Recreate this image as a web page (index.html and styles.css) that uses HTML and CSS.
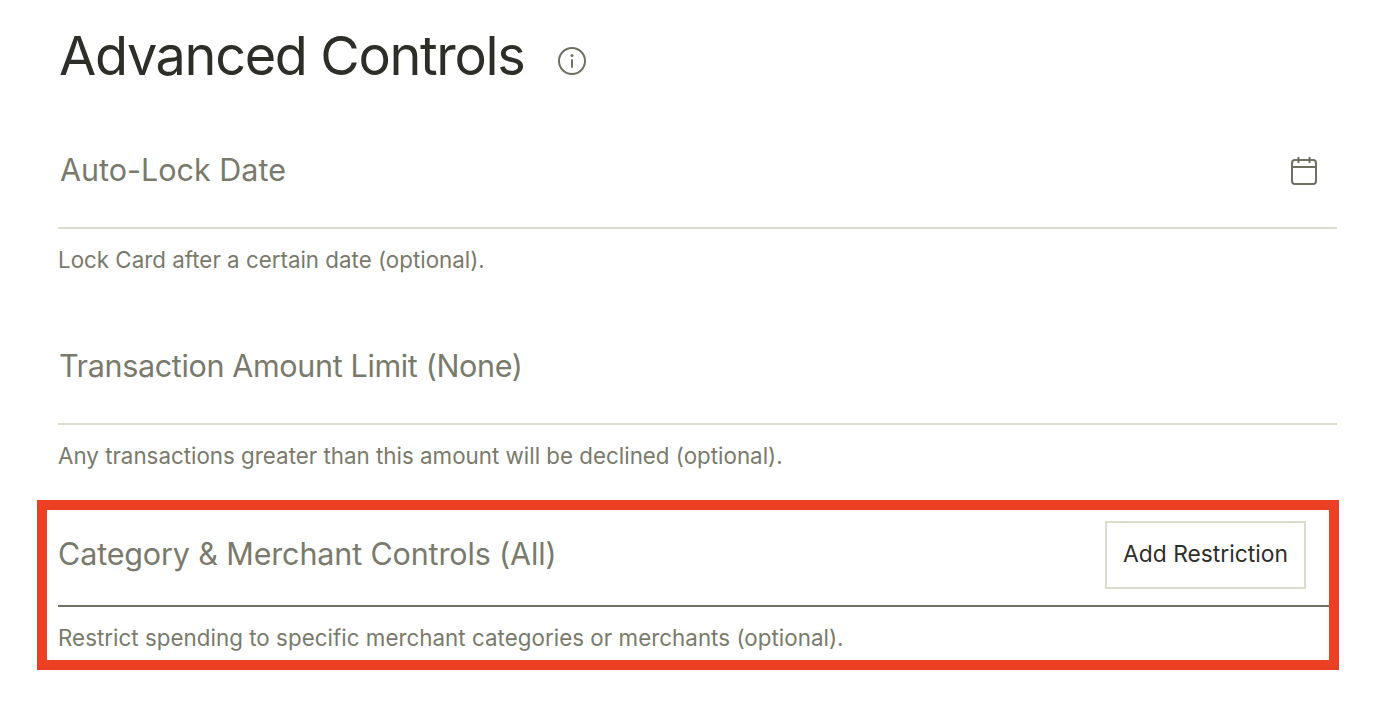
FILE: index.html
```html
<!DOCTYPE html>
<html lang="en">
<head>
<meta charset="utf-8">
<title>Advanced Controls</title>
<link rel="stylesheet" href="styles.css">
</head>
<body>
<main class="page">
  <header class="heading">
    <h1 class="title">Advanced Controls</h1>
    <svg class="info-icon" width="30" height="30" viewBox="0 0 30 30" fill="none" stroke="#6f7062" stroke-width="2" stroke-linecap="round">
      <circle cx="15" cy="15" r="13"/>
      <path d="M15 14v7"/>
      <circle cx="15" cy="9.500" r="1.500" fill="#6f7062" stroke="none"/>
    </svg>
  </header>
  <section class="field field-date">
    <div class="field-row">
      <span class="label label-date">Auto-Lock Date</span>
      <svg class="cal-icon" width="28" height="30" viewBox="0 0 28 30" fill="none" stroke="#6f7062" stroke-width="2">
        <rect x="2" y="4" width="24" height="24" rx="3"/>
        <path d="M2 11h24M8.500 1v6M19.500 1v6"/>
      </svg>
    </div>
    <p class="hint">Lock Card after a certain date (optional).</p>
  </section>
  <section class="field field-limit">
    <div class="field-row">
      <span class="label label-limit">Transaction Amount Limit (None)</span>
    </div>
    <p class="hint hint-limit">Any transactions greater than this amount will be declined (optional).</p>
  </section>
  <section class="highlight">
    <div class="highlight-row">
      <span class="label label-category">Category &amp; Merchant Controls (All)</span>
      <button class="add-btn" type="button">Add Restriction</button>
    </div>
    <p class="hint hint-flush">Restrict spending to specific merchant categories or merchants (optional).</p>
  </section>
</main>
</body>
</html>
```
FILE: styles.css
```css
* { box-sizing: border-box; }
html, body { margin: 0; background: #fff; }
body {
  font-family: Inter, "Liberation Sans", sans-serif;
  color: #797a6c;
  width: 1388px;
  height: 718px;
  overflow: hidden;
}
.page { padding: 0 51px 0 58px; }
.heading {
  display: flex;
  align-items: center;
  height: 110px;
  padding-left: 1px;
}
.title {
  margin: 0;
  font-size: 54px;
  font-weight: 400;
  letter-spacing: -1.350px;
  line-height: 1;
  color: #2e2e28;
  padding-top: 2px;
}
.info-icon { margin-left: 33px; margin-top: 11px; }
.field-row {
  display: flex;
  align-items: center;
  justify-content: space-between;
  height: 119px;
  border-bottom: 2px solid #dcdccc;
  padding: 3px 19px 0 2px;
}
.cal-icon { margin-top: 2px; }
.label { font-size: 30.500px; font-weight: 400; line-height: 1; color: #797a6c; }
.label-limit { letter-spacing: -0.350px; margin-left: -1px; }
.label-category { letter-spacing: -0.140px; margin-top: -2px; }
.hint { margin: 0; font-size: 22.350px; line-height: 1; padding-top: 20px; height: 77px; color: #797a6c; }
.hint-limit { height: 75px; }
.highlight {
  margin: 0 -2px 0 -21px;
  border: 10px solid #ec4024;
  height: 170px;
  padding-left: 11px;
}
.highlight-row {
  display: flex;
  align-items: center;
  justify-content: space-between;
  height: 97px;
  border-bottom: 2px solid #6f7062;
  padding: 0 23px 5px 0;
}
.add-btn {
  width: 201px;
  height: 68px;
  background: #fff;
  border: 2px solid #dcdccc;
  font-family: inherit;
  font-size: 22.800px;
  color: #2e2e28;
  padding: 0 0 3px;
}
.hint-flush { padding-top: 20px; height: auto; letter-spacing: 0.030px; }
```
